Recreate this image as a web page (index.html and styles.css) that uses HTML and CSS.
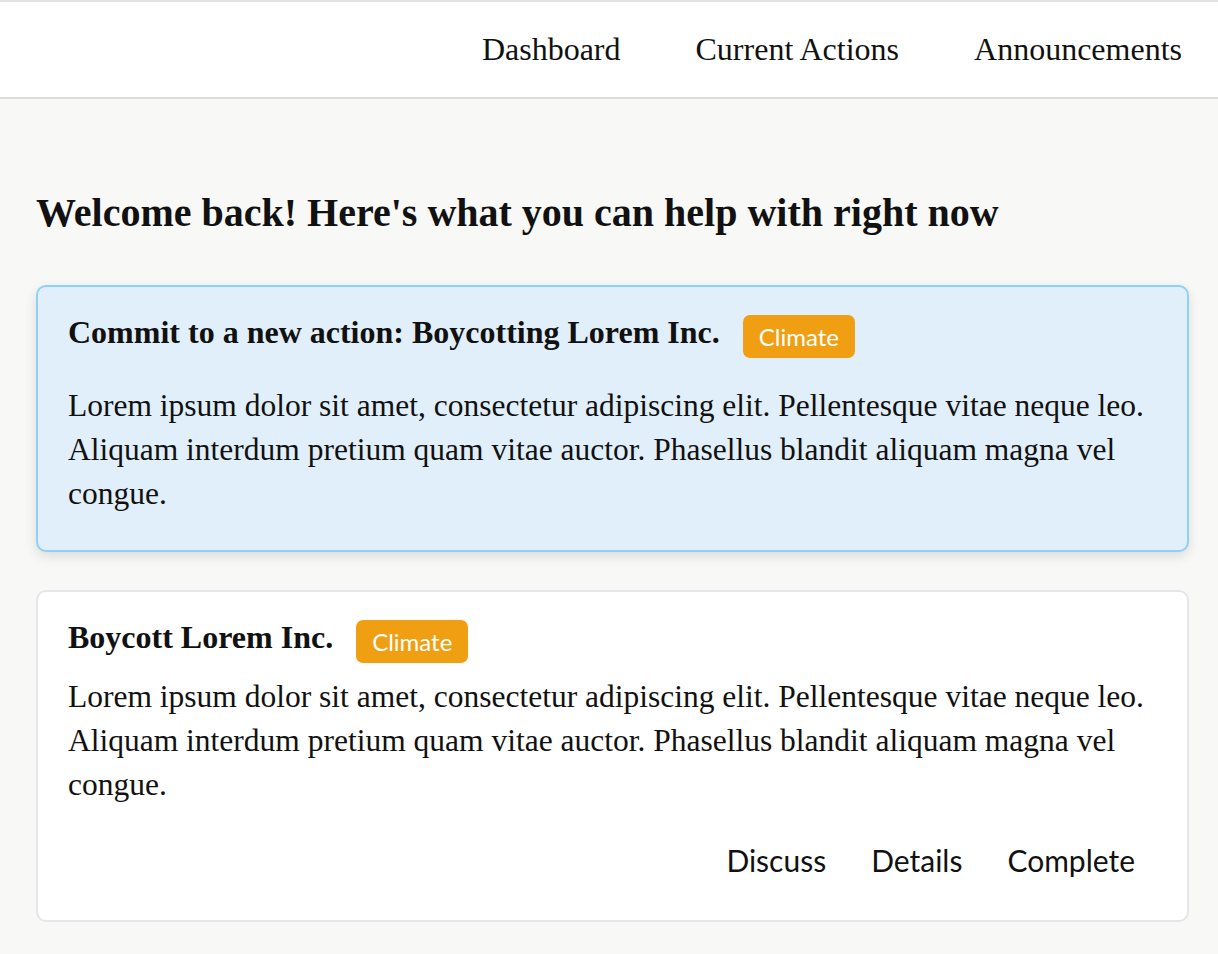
FILE: index.html
```html
<!DOCTYPE html>
<html lang="en">
<head>
<meta charset="utf-8">
<title>Dashboard</title>
<link rel="stylesheet" href="styles.css">
</head>
<body>
<header class="topbar">
  <nav class="nav">
    <a class="nav-link" href="#">Dashboard</a>
    <a class="nav-link" href="#">Current Actions</a>
    <a class="nav-link" href="#">Announcements</a>
  </nav>
</header>
<main class="content">
  <h1 class="page-title">Welcome back! Here's what you can help with right now</h1>
  <section class="card card-new">
    <div class="card-head">
      <h2 class="card-title">Commit to a new action: Boycotting Lorem Inc.</h2>
      <span class="badge">Climate</span>
    </div>
    <p class="card-text">Lorem ipsum dolor sit amet, consectetur adipiscing elit. Pellentesque vitae neque leo. Aliquam interdum pretium quam vitae auctor. Phasellus blandit aliquam magna vel congue.</p>
  </section>
  <section class="card card-plain">
    <div class="card-head">
      <h2 class="card-title">Boycott Lorem Inc.</h2>
      <span class="badge">Climate</span>
    </div>
    <p class="card-text">Lorem ipsum dolor sit amet, consectetur adipiscing elit. Pellentesque vitae neque leo. Aliquam interdum pretium quam vitae auctor. Phasellus blandit aliquam magna vel congue.</p>
    <div class="card-actions">
      <a class="action" href="#">Discuss</a>
      <a class="action" href="#">Details</a>
      <a class="action" href="#">Complete</a>
    </div>
  </section>
</main>
</body>
</html>
```
FILE: styles.css
```css
* { box-sizing: border-box; }
html, body { margin: 0; padding: 0; }
body {
  background: #f8f8f6;
  font-family: "Liberation Serif", "Times New Roman", serif;
  color: #111;
  border-top: 2px solid #e3e3e3;
}
.topbar {
  background: #fff;
  height: 97px;
  border-bottom: 2px solid #dcdcdc;
  display: flex;
  align-items: center;
  justify-content: flex-end;
  padding-right: 36px;
}
.nav { display: flex; gap: 75px; }
.nav-link {
  color: #111;
  text-decoration: none;
  font-size: 32px;
}
.content { padding: 90px 29px 30px 36px; }
.page-title {
  margin: 0 0 48px 0;
  font-size: 40px;
  font-weight: bold;
  line-height: 48px;
}
.card {
  border-radius: 10px;
  padding: 25px 31px 34px 30px;
  margin-bottom: 38px;
}
.card-new {
  background: #e1effb;
  border: 2px solid #8ed1f8;
  box-shadow: 0 4px 12px rgba(0,0,0,0.12);
}
.card-plain {
  background: #fff;
  border: 2px solid #e5e5ea;
  padding-bottom: 42px;
}
.card-head { display: flex; align-items: flex-start; gap: 23px; }
.card-title { margin: 0; font-size: 32px; line-height: 40px; font-weight: bold; }
.badge {
  margin-top: 3px;
  background: #f09e12;
  color: #fff;
  font-family: "Lato", "Noto Sans", sans-serif;
  font-size: 24px;
  line-height: 29px;
  padding: 7px 16px;
  border-radius: 7px;
}
.card-text { margin: 26px 0 0 0; font-size: 31.5px; line-height: 44px; }
.card-plain .card-text { margin-top: 12px; }
.card-actions { display: flex; justify-content: flex-end; gap: 45px; padding-right: 21px; margin-top: 35px; }
.action {
  color: #111;
  text-decoration: none;
  font-family: "Lato", "Noto Sans", sans-serif;
  font-size: 30px;
  line-height: 36px;
}
```
